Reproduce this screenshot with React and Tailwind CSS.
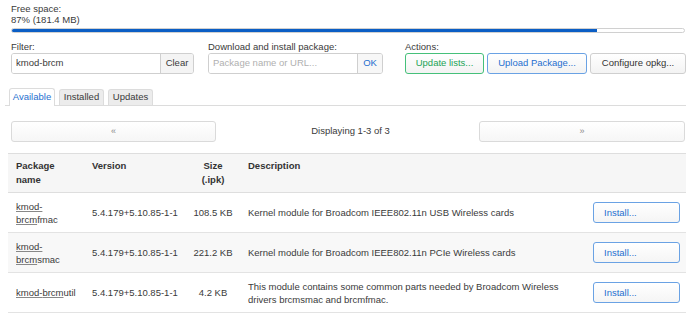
const rows = [
  {
    head: "kmod-",
    match: "brcm",
    rest: "fmac",
    split: true,
    version: "5.4.179+5.10.85-1-1",
    size: "108.5 KB",
    desc: "Kernel module for Broadcom IEEE802.11n USB Wireless cards",
  },
  {
    head: "kmod-",
    match: "brcm",
    rest: "smac",
    split: true,
    version: "5.4.179+5.10.85-1-1",
    size: "221.2 KB",
    desc: "Kernel module for Broadcom IEEE802.11n PCIe Wireless cards",
  },
  {
    head: "kmod-",
    match: "brcm",
    rest: "util",
    split: false,
    version: "5.4.179+5.10.85-1-1",
    size: "4.2 KB",
    desc: "This module contains some common parts needed by Broadcom Wireless drivers brcmsmac and brcmfmac.",
  },
];

const btn =
  "h-[21px] rounded-[3px] border bg-gradient-to-b from-white to-[#f3f3f3] flex items-center justify-center";

export default function App() {
  return (
    <div className="w-[690px] h-[323px] overflow-hidden bg-white font-['Liberation_Sans',Arial,sans-serif] text-[9.5px] text-[#3a3a3a]">
      {/* free space */}
      <div className="pl-[11px] pr-[5px] pt-[3px]">
        <div className="leading-[11px]">Free space:</div>
        <div className="leading-[11px]">87% (181.4 MB)</div>
        <div className="mt-[3px] h-[5px] rounded-full border border-[#d0d0d0] bg-white overflow-hidden">
          <div className="h-full w-[87%] bg-[#0b5ec5]" />
        </div>
      </div>

      {/* controls */}
      <div className="flex pl-[11px] mt-[8px]">
        <div className="w-[183px]">
          <div className="leading-[11px]">Filter:</div>
          <div className="mt-[1px] flex h-[21px] rounded-[3px] border border-[#cfcfcf] overflow-hidden">
            <div className="flex-1 flex items-center pl-[4px] bg-white">kmod-brcm</div>
            <div className="w-[33px] flex items-center justify-center border-l border-[#cfcfcf] bg-[#f4f4f4]">
              Clear
            </div>
          </div>
        </div>
        <div className="ml-[14px] w-[175px]">
          <div className="leading-[11px]">Download and install package:</div>
          <div className="mt-[1px] flex h-[21px] rounded-[3px] border border-[#cfcfcf] overflow-hidden">
            <div className="flex-1 flex items-center pl-[4px] text-[#b0b0b0] bg-white">
              Package name or URL...
            </div>
            <div className="w-[25px] flex items-center justify-center border-l border-[#cfcfcf] bg-[#f7f7f7] text-[#1f6fcf]">
              OK
            </div>
          </div>
        </div>
        <div className="ml-[22px]">
          <div className="leading-[11px]">Actions:</div>
          <div className="mt-[1px] flex gap-[3px]">
            <div className={`${btn} w-[79px] border-[#45c07a] text-[#22a356]`}>Update lists...</div>
            <div className={`${btn} w-[100px] border-[#6aa2e4] text-[#1f6fcf]`}>Upload Package...</div>
            <div className={`${btn} w-[96px] border-[#cfcfcf] text-[#333]`}>Configure opkg...</div>
          </div>
        </div>
      </div>

      {/* tabs */}
      <div className="mt-[14px] ml-[5px] mr-[4px] pl-[4px] flex items-end gap-[4px] border-b border-[#dcdcdc] h-[18px]">
        <div className="w-[46px] h-[18px] -mb-px flex items-center justify-center rounded-t-[3px] border border-b-0 border-[#dcdcdc] bg-white text-[#1f6fcf]">
          Available
        </div>
        <div className="w-[45px] h-[16px] flex items-center justify-center rounded-t-[3px] border border-b-0 border-[#dcdcdc] bg-[#ececec]">
          Installed
        </div>
        <div className="w-[45px] h-[16px] flex items-center justify-center rounded-t-[3px] border border-b-0 border-[#dcdcdc] bg-[#ececec]">
          Updates
        </div>
      </div>

      {/* pagination */}
      <div className="mt-[15px] pl-[11px] pr-[5px] grid grid-cols-[205px_1fr_206px] items-center">
        <div className="h-[21px] rounded-[3px] border border-[#dadada] bg-gradient-to-b from-white to-[#f6f6f6] flex items-center justify-center text-[#8a8a8a] text-[9px]">
          «
        </div>
        <div className="text-center pl-[6px]">Displaying 1-3 of 3</div>
        <div className="h-[21px] rounded-[3px] border border-[#dadada] bg-gradient-to-b from-white to-[#f6f6f6] flex items-center justify-center text-[#8a8a8a] text-[9px]">
          »
        </div>
      </div>

      {/* table */}
      <div className="mt-[11px] ml-[8px] w-[678px]">
        <div className="grid grid-cols-[76px_102px_54px_345px_101px] h-[40px] bg-[#f6f6f6] border-t border-b border-[#dedede] font-bold leading-[14px] text-[#333]">
          <div className="pl-[8px] pt-[5px]">
            Package
            <br />
            name
          </div>
          <div className="pl-[8px] pt-[5px]">Version</div>
          <div className="pt-[5px] text-center">
            Size
            <br />
            (.ipk)
          </div>
          <div className="pl-[8px] pt-[5px]">Description</div>
          <div />
        </div>
        {rows.map((r, i) => (
          <div
            key={i}
            className={`grid grid-cols-[76px_102px_54px_345px_101px] h-[40px] items-center border-b border-[#e3e3e3] leading-[13px] ${
              i === 1 ? "bg-[#f8f8f8]" : "bg-white"
            }`}
          >
            <div className="pl-[8px] whitespace-nowrap">
              <span className="underline decoration-[#888]">{r.head}</span>
              {r.split && <br />}
              <span className="underline decoration-[#888]">{r.match}</span>
              {r.rest}
            </div>
            <div className="pl-[8px]">{r.version}</div>
            <div className="text-center">{r.size}</div>
            <div className="pl-[8px] pr-[10px]">{r.desc}</div>
            <div className="pl-[8px]">
              <div className="w-[87px] h-[21px] rounded-[3px] border border-[#6aa2e4] bg-gradient-to-b from-white to-[#f5f5f5] flex items-center pl-[10px] text-[#1f6fcf]">
                Install...
              </div>
            </div>
          </div>
        ))}
      </div>
    </div>
  );
}
